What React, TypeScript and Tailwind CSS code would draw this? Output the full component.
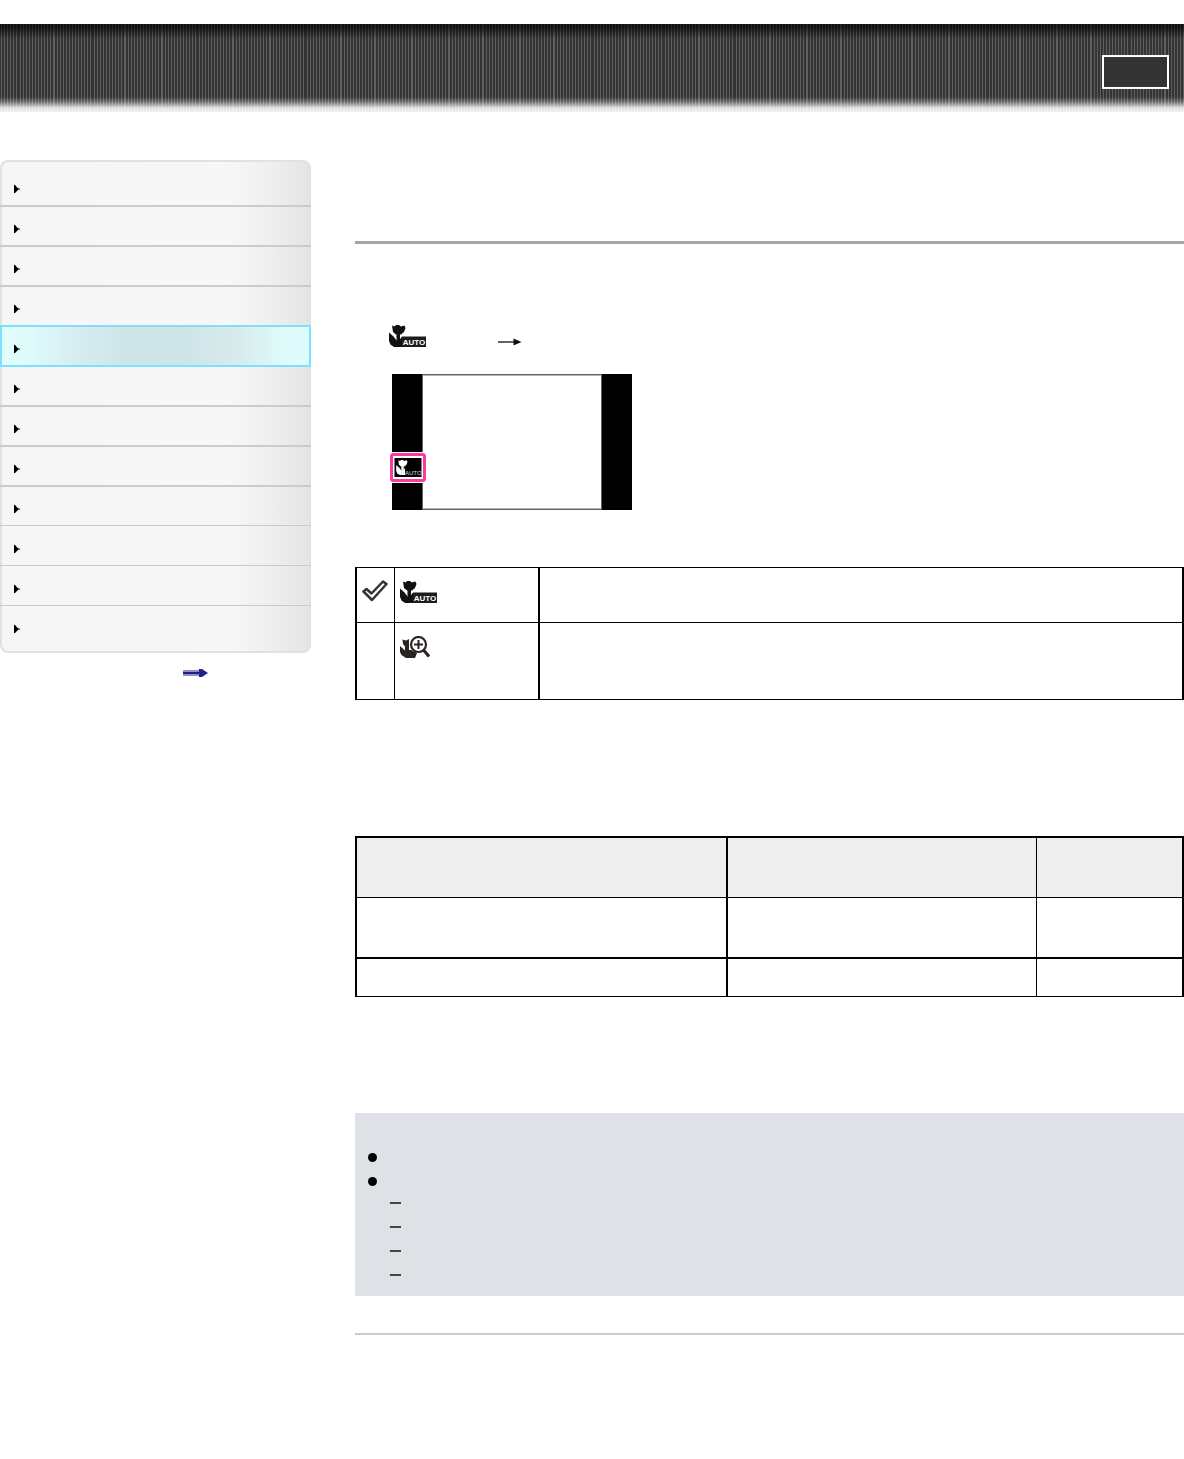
import React from 'react';

interface NavItem {
  label: string;
  className: string;
}

const navItems: NavItem[] = [
  { label: 'Top page', className: 'h-[47px] pb-3 border-b-2 border-[#cccccc]' },
  { label: 'Before use', className: 'h-10 pb-3 border-b-2 border-[#cccccc]' },
  { label: 'Identifying parts', className: 'h-10 pb-3 border-b-2 border-[#cccccc]' },
  { label: 'Table of contents', className: 'h-[38px] pb-3' },
  { label: 'Shooting', className: '' },
  { label: 'Viewing', className: 'h-10 pb-3 border-b-2 border-[#cccccc]' },
  { label: 'Using functions for shooting', className: 'h-10 pb-3 border-b-2 border-[#cccccc]' },
  { label: 'Using functions for viewing', className: 'h-10 pb-3 border-b-2 border-[#cccccc]' },
  { label: 'Changing settings', className: 'h-[39px] pb-3 border-b border-[#cacaca]' },
  { label: 'Viewing images on a TV', className: 'h-10 pb-3 border-b border-[#cacaca]' },
  { label: 'Using with your computer', className: 'h-10 pb-3 border-b border-[#cacaca]' },
  { label: 'Troubleshooting', className: 'h-[47px] pb-5' },
];

const currentItem = 4;

// Pinstripes: a light line every 3px, with a seam at the start of each group.
// Some seams show as a double line, the others as a wider gap.
const groupWidths = [37, 37, 34, 37, 34];
const gapSeams = [0, 2, 5, 8, 16, 18, 20, 27, 31];

const buildStripes = () => {
  const stops: string[] = [];
  let end = 0;
  const addLine = (x: number, width: number) => {
    stops.push(`#333 ${end}px ${x}px`, `#5f5f5f ${x}px ${x + width}px`);
    end = x + width;
  };

  for (let x = 1; x < 16; x += 3) addLine(x, 1);

  let start = 16;
  for (let k = 0; k < 35; k++) {
    const width = groupWidths[k % groupWidths.length];
    addLine(start, gapSeams.includes(k) ? 1 : 2);
    for (let x = 4; x < width; x += 3) addLine(start + x, 1);
    start += width;
  }
  return `repeating-linear-gradient(to right, ${stops.join(', ')}, #333 ${end}px ${start}px)`;
};

const headerShade =
  'linear-gradient(to bottom, rgba(0,0,0,0.7) 0px, rgba(0,0,0,0.6) 4px, rgba(0,0,0,0) 15px, rgba(255,255,255,0) 73px, rgba(255,255,255,0.3) 78px, rgba(255,255,255,0.85) 84px, rgba(255,255,255,0.93) 88px)';

const headerBackground = `${headerShade}, ${buildStripes()}`;

const ItemArrow = () => (
  <svg viewBox="0 0 6 8" className="w-1.5 h-2" aria-hidden="true">
    <path d="M0 0h1l1 1 1 1.5 1.500 1H6v1H4.500L3 6 1 8H0z" fill="#000" />
  </svg>
);

const Tulip = ({ fill }: { fill: string }) => (
  <g fill={fill}>
    <path d="M3 0.500 5.500 1.500 7 0h3l1.800 1.500L15.500 0.500 16.500 3 15 7 12 9.500H7L4 7z" />
    <path d="M7.500 9H11v13H7.500z" />
    <path d="M0 7.500 4.500 11.500 8 16v6H5L1.500 19.500 0 16z" />
    <path d="M10.500 22V15l2.500-3.500V22z" />
  </g>
);

const MacroAuto = () => (
  <svg viewBox="0 0 37 22" className="w-[37px] h-[22px]" role="img" aria-label="Auto macro">
    <Tulip fill="#111" />
    <rect x="13" y="11.500" width="24" height="10.500" fill="#1c1c1c" />
    <text x="25" y="20" textAnchor="middle" fontSize="8" fontWeight="bold" fontFamily="Liberation Sans, sans-serif" fill="#fff">
      AUTO
    </text>
  </svg>
);

const MacroZoom = () => (
  <svg viewBox="0 0 30 22" className="w-[30px] h-[22px]" role="img" aria-label="Close focus">
    <path
      d="M2.500 3.500 6 4.500 9 3V14L11 14l6 3-2 5H6L1.500 19 0 16V10L5 14.500V10.500L3 8z"
      fill="#2a2422"
    />
    <circle cx="18.500" cy="8.500" r="7.500" fill="#fff" stroke="#2a2422" strokeWidth="2.200" />
    <path d="M18.500 4v9M14 8.500h9" stroke="#2a2422" strokeWidth="2" />
    <path d="M23.500 14 29 20.500" stroke="#2a2422" strokeWidth="3" />
  </svg>
);

const CheckMark = () => (
  <svg viewBox="0 0 26 22" className="w-[26px] h-[22px]" role="img" aria-label="Default setting">
    <path d="M1.500 11.500 4.500 9 9.500 13.500 21 1.500l3.500 2.500L10 20z" fill="#fff" stroke="#333" strokeWidth="2.500" strokeLinejoin="round" />
  </svg>
);

const RightArrow = () => (
  <svg viewBox="0 0 24 8" className="w-6 h-2" role="img" aria-label="then">
    <path d="M0 4h18" stroke="#111" strokeWidth="1.300" />
    <path d="M15.500 0.500 23.500 4l-8 3.500z" fill="#111" />
  </svg>
);

const BlueArrow = () => (
  <svg viewBox="0 0 26 8" className="w-[26px] h-2" aria-hidden="true">
    <path d="M0 1h17v6H0z" fill="#8f8fc4" />
    <path d="M0 3h20v2H0z" fill="#1e1e88" />
    <path d="M16 0h3l6 4-6 4h-3z" fill="#23238c" />
  </svg>
);

// Camera display with the selected menu item outlined in pink
const CameraScreen = () => (
  <svg viewBox="0 0 243 136" className="w-[243px] h-[136px]" role="img" aria-label="Camera screen">
    <rect x="3" width="240" height="136" fill="#000" />
    <rect x="33" width="180" height="136" fill="#666" />
    <rect x="34" y="1.500" width="178" height="133" fill="#fff" />
    <rect x="0" y="78" width="38" height="31" fill="#fff" />
    <rect x="2.500" y="80.500" width="33" height="26" rx="2" fill="#fff" stroke="#fb3c9c" strokeWidth="3" />
    <rect x="5.500" y="84" width="27" height="19" fill="#000" />
    <svg x="7" y="86" width="12" height="15" viewBox="0 0 17 22">
      <Tulip fill="#fff" />
    </svg>
    <text x="16" y="101" fontSize="6" fontFamily="Liberation Sans, sans-serif" fill="#ddd">
      AUTO
    </text>
  </svg>
);

const Header = () => (
  <header
    className="mt-6 h-[88px] flex justify-end items-start pt-[31px] pr-[15px]"
    style={{ backgroundImage: headerBackground }}
  >
    <button type="button" aria-label="Search" className="w-[67px] h-[34px] border-2 border-white bg-[#333333]" />
  </header>
);

const Sidebar = () => (
  <aside className="w-[311px] shrink-0">
    <nav className="rounded-lg border-2 border-[#e0e1e4] bg-[linear-gradient(to_right,#f6f6f6_0%,#f7f7f7_74%,#f0f0f0_86%,#e5e5e5_100%)]">
      <ul className="-m-0.5">
        {navItems.map((item, i) => (
          <li key={item.label}>
            <a
              href="#"
              aria-label={item.label}
              className={
                i === currentItem
                  ? 'flex items-end h-[42px] pl-3 pb-3 border-2 border-[#7fdfff] bg-[linear-gradient(to_right,#dffdfb_0%,#dffcfc_8%,#d9eff4_20%,#cfe4e7_40%,#cfe4e7_60%,#d8ecee_78%,#dffafa_92%,#dffdfd_100%)]'
                  : `flex items-end pl-3.5 ${item.className}`
              }
            >
              <ItemArrow />
            </a>
          </li>
        ))}
      </ul>
    </nav>
    <a href="#" aria-label="Contents list" className="flex pt-4 pl-[183px]">
      <BlueArrow />
    </a>
  </aside>
);

const ModeTable = () => (
  <table className="w-full table-fixed border-separate border-spacing-0 border-t border-l-2 border-r-2 border-black">
    <tbody className="align-top">
      <tr className="h-[55px]">
        <td className="w-[37px] pl-[5px] pt-3 border-b border-black"><CheckMark /></td>
        <td className="w-36 pl-[5px] pt-[13px] border-b border-l border-black"><MacroAuto /></td>
        <td className="border-b border-l-2 border-black" />
      </tr>
      <tr className="h-[77px]">
        <td className="border-b border-black" />
        <td className="pl-[5px] pt-[13px] border-b border-l border-black"><MacroZoom /></td>
        <td className="border-b border-l-2 border-black" />
      </tr>
    </tbody>
  </table>
);

const RangeTable = () => (
  <table className="w-full table-fixed border-separate border-spacing-0 border-t-2 border-l-2 border-r-2 border-black">
    <thead>
      <tr className="h-[60px] bg-[#eeeeee]">
        <th scope="col" aria-label="Mode" className="border-b border-black" />
        <th scope="col" aria-label="Focus range" className="w-[310px] border-b border-l-2 border-black" />
        <th scope="col" aria-label="Zoom" className="w-[146px] border-b border-l border-black" />
      </tr>
    </thead>
    <tbody>
      <tr className="h-[61px]">
        <td className="border-b-2 border-black" />
        <td className="border-b-2 border-l-2 border-black" />
        <td className="border-b-2 border-l border-black" />
      </tr>
      <tr className="h-[38px]">
        <td className="border-b border-black" />
        <td className="border-b border-l-2 border-black" />
        <td className="border-b border-l border-black" />
      </tr>
    </tbody>
  </table>
);

const Notes = () => (
  <section aria-label="Notes" className="bg-[#dee1e6] pt-8 pb-[9px]">
    <ul className="pl-[13px]">
      <li className="h-6 flex items-center">
        <span className="size-[9px] rounded-full bg-black" />
      </li>
      <li>
        <div className="h-6 flex items-center">
          <span className="size-[9px] rounded-full bg-black" />
        </div>
        <ul className="pl-[22px] -mt-0.5">
          {[0, 1, 2, 3].map(n => (
            <li key={n} className="h-6 flex items-center">
              <span className="w-[11px] h-0.5 bg-[#444444]" />
            </li>
          ))}
        </ul>
      </li>
    </ul>
  </section>
);

export default function App() {
  return (
    <div className="bg-white font-['Liberation_Sans',sans-serif] text-black">
      <Header />
      <div className="flex gap-11 pt-12 pb-[124px]">
        <Sidebar />
        <main className="flex-1 min-w-0">
          <div className="mt-[81px] h-[3px] bg-[#a5a5a5]" />
          <div className="flex items-center gap-[72px] pt-[81px] pl-[34px]">
            <MacroAuto />
            <div className="pt-3">
              <RightArrow />
            </div>
          </div>
          <div className="pt-[27px] pl-[34px]">
            <CameraScreen />
          </div>
          <div className="pt-[57px]">
            <ModeTable />
          </div>
          <div className="pt-[136px]">
            <RangeTable />
          </div>
          <div className="pt-[116px]">
            <Notes />
          </div>
          <div className="mt-[37px] h-0.5 bg-[#cccccc]" />
        </main>
      </div>
    </div>
  );
}
